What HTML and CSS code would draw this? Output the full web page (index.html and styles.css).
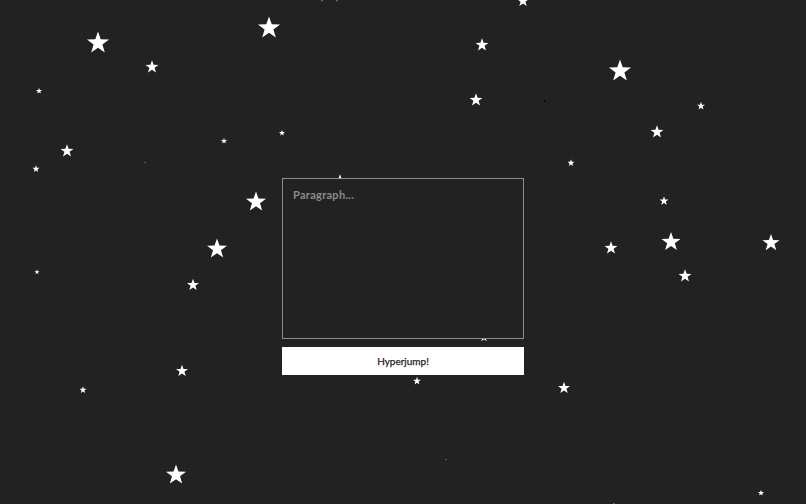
FILE: index.html
```html
<!DOCTYPE html>
<html lang="en">
<head>
<meta charset="utf-8">
<title>Hyperjump</title>
<link rel="stylesheet" href="styles.css">
</head>
<body>
<svg class="sky" width="806" height="504" viewBox="0 0 806 504" aria-hidden="true">
  <defs>
    <polygon id="s" points="0,-1 0.235,-0.324 0.951,-0.309 0.38,0.124 0.588,0.809 0,0.4 -0.588,0.809 -0.38,0.124 -0.951,-0.309 -0.235,-0.324"/>
  </defs>
  <g class="stars">
    <use href="#s" transform="translate(98 43) scale(11.6)"/>
    <use href="#s" transform="translate(269 28) scale(11.6)"/>
    <use href="#s" transform="translate(152 67) scale(6.8)"/>
    <use href="#s" transform="translate(39 91) scale(3.2)"/>
    <use href="#s" transform="translate(67 151) scale(6.8)"/>
    <use href="#s" transform="translate(36 169) scale(3.7)"/>
    <use href="#s" transform="translate(224 141) scale(3.2)"/>
    <use href="#s" transform="translate(282 133) scale(3.2)"/>
    <use href="#s" transform="translate(256 202) scale(10.5)"/>
    <use href="#s" transform="translate(217 249) scale(10.5)"/>
    <use href="#s" transform="translate(193 285) scale(6.3)"/>
    <use href="#s" transform="translate(37 272) scale(2.7)"/>
    <use href="#s" transform="translate(182 371) scale(6.3)"/>
    <use href="#s" transform="translate(83 390) scale(3.7)"/>
    <use href="#s" transform="translate(176 475) scale(10.5)"/>
    <use href="#s" transform="translate(340 180.5) scale(6.3)"/>
    <use href="#s" transform="translate(523 1) scale(6.3)"/>
    <use href="#s" transform="translate(482 45) scale(6.8)"/>
    <use href="#s" transform="translate(476 100) scale(6.8)"/>
    <use href="#s" transform="translate(620 71) scale(11.6)"/>
    <use href="#s" transform="translate(701 106) scale(4.2)"/>
    <use href="#s" transform="translate(657 132) scale(6.8)"/>
    <use href="#s" transform="translate(571 163) scale(3.7)"/>
    <use href="#s" transform="translate(664 201) scale(4.7)"/>
    <use href="#s" transform="translate(611 248) scale(6.8)"/>
    <use href="#s" transform="translate(671 242) scale(10)"/>
    <use href="#s" transform="translate(771 243) scale(9)"/>
    <use href="#s" transform="translate(685 276) scale(6.8)"/>
    <use href="#s" transform="translate(484 337.5) scale(4.5)"/>
    <use href="#s" transform="translate(417 381) scale(4.2)"/>
    <use href="#s" transform="translate(564 388) scale(6.3)"/>
    <use href="#s" transform="translate(761 493) scale(3.2)"/>
    <use href="#s" transform="translate(614 508) scale(5.3)"/>
  </g>
  <circle class="dot" cx="145" cy="162.5" r="0.8"/>
  <circle class="dot" cx="446" cy="459.5" r="0.8"/>
  <circle class="dot" cx="322" cy="0.5" r="1"/>
  <circle class="dot" cx="337" cy="0.5" r="1"/>
  <circle class="dot-dark" cx="544.5" cy="101" r="1"/>
</svg>

<main class="panel">
  <textarea class="paragraph" placeholder="Paragraph..."></textarea>
  <button class="jump" type="button">Hyperjump!</button>
</main>
</body>
</html>
```

FILE: styles.css
```css
html, body {
  margin: 0;
  padding: 0;
  height: 100%;
}

body {
  background: #222222;
  overflow: hidden;
  font-family: Lato, "Open Sans", "DejaVu Sans", sans-serif;
}

.sky {
  position: absolute;
  left: 0;
  top: 0;
  z-index: 0;
  display: block;
}

.stars use {
  fill: #ffffff;
}

.dot {
  fill: #6a6a6a;
}

.dot-dark {
  fill: #000000;
}

.panel {
  position: relative;
  z-index: 1;
  width: 242px;
  margin: 178px auto 0;
  display: flex;
  flex-direction: column;
  gap: 8px;
}

.paragraph {
  box-sizing: border-box;
  width: 100%;
  height: 161px;
  margin: 0;
  padding: 10px;
  background: #222222;
  color: #dddddd;
  border: 1px solid #8c8c8c;
  border-radius: 0;
  resize: none;
  outline: none;
  font-family: Lato, "Open Sans", "DejaVu Sans", sans-serif;
  font-size: 11px;
  font-weight: 700;
  line-height: 12px;
  letter-spacing: 0.3px;
}

.paragraph::placeholder {
  color: #8a8a8a;
  opacity: 1;
}

.jump {
  box-sizing: border-box;
  width: 100%;
  height: 28px;
  margin: 0;
  padding: 0;
  background: #ffffff;
  color: #222222;
  border: none;
  border-radius: 0;
  font-family: Lato, "Open Sans", "DejaVu Sans", sans-serif;
  font-size: 10px;
  font-weight: 400;
  -webkit-text-stroke: 0.25px #222222;
  cursor: pointer;
}
```
